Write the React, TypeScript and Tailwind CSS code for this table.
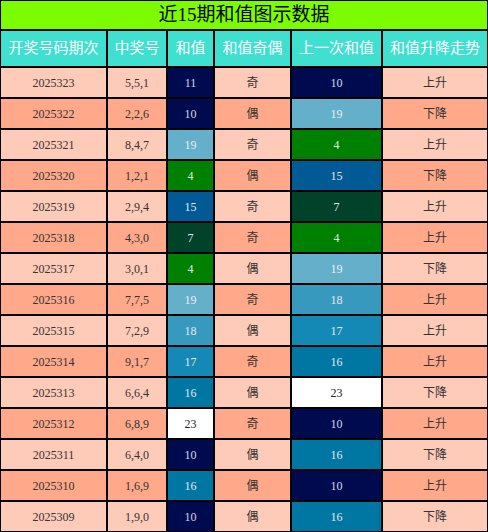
import React from "react";

type Row = [string, string, number, string, number, string];

const rows: Row[] = [
  ["2025323", "5,5,1", 11, "奇", 10, "上升"],
  ["2025322", "2,2,6", 10, "偶", 19, "下降"],
  ["2025321", "8,4,7", 19, "奇", 4, "上升"],
  ["2025320", "1,2,1", 4, "偶", 15, "下降"],
  ["2025319", "2,9,4", 15, "奇", 7, "上升"],
  ["2025318", "4,3,0", 7, "奇", 4, "上升"],
  ["2025317", "3,0,1", 4, "偶", 19, "下降"],
  ["2025316", "7,7,5", 19, "奇", 18, "上升"],
  ["2025315", "7,2,9", 18, "偶", 17, "上升"],
  ["2025314", "9,1,7", 17, "奇", 16, "上升"],
  ["2025313", "6,6,4", 16, "偶", 23, "下降"],
  ["2025312", "6,8,9", 23, "奇", 10, "上升"],
  ["2025311", "6,4,0", 10, "偶", 16, "下降"],
  ["2025310", "1,6,9", 16, "偶", 10, "上升"],
  ["2025309", "1,9,0", 10, "偶", 16, "下降"],
];

// sum value -> cell colour
const sumClass = (v: number) => {
  switch (v) {
    case 4:
      return "bg-[#008000] text-[#e6e6e6]";
    case 7:
      return "bg-[#00432a] text-[#e6e6e6]";
    case 10:
    case 11:
      return "bg-[#000b4f] text-[#d8d8e8]";
    case 15:
      return "bg-[#005a96] text-[#e6e6e6]";
    case 16:
      return "bg-[#0077a3] text-[#e6e6e6]";
    case 17:
      return "bg-[#1489b5] text-[#e6e6e6]";
    case 18:
      return "bg-[#3899bf] text-[#e6e6e6]";
    case 19:
      return "bg-[#64afc9] text-[#eeeeee]";
    default:
      return "bg-white text-[#222]";
  }
};

const headers = ["开奖号码期次", "中奖号", "和值", "和值奇偶", "上一次和值", "和值升降走势"];

export default function App() {
  return (
    <div
      className="w-[488px] h-[532px] bg-black p-px grid grid-cols-[105px_58px_45px_75px_89px_104px] grid-rows-[28px_35px_repeat(15,29px)] gap-[2px]"
      style={{ fontFamily: '"Liberation Serif", "Noto Sans CJK SC", serif' }}
    >
      <div className="col-span-6 bg-[#7cfc00] flex items-center justify-center text-[19px] text-black">
        近15期和值图示数据
      </div>
      {headers.map((h) => (
        <div key={h} className="bg-[#40e0d0] flex items-center justify-center text-[15px] text-white">
          {h}
        </div>
      ))}
      {rows.map((r, i) => {
        const bg = i % 2 === 0 ? "bg-[#ffcbb9]" : "bg-[#ffa98a]";
        const cell = "flex items-center justify-center text-[12px] text-[#333]";
        return (
          <React.Fragment key={r[0]}>
            <div className={`${cell} ${bg}`}>{r[0]}</div>
            <div className={`${cell} ${bg}`}>{r[1]}</div>
            <div className={`flex items-center justify-center text-[12px] ${sumClass(r[2])}`}>{r[2]}</div>
            <div className={`${cell} ${bg}`}>{r[3]}</div>
            <div className={`flex items-center justify-center text-[12px] ${sumClass(r[4])}`}>{r[4]}</div>
            <div className={`${cell} ${bg}`}>{r[5]}</div>
          </React.Fragment>
        );
      })}
    </div>
  );
}
